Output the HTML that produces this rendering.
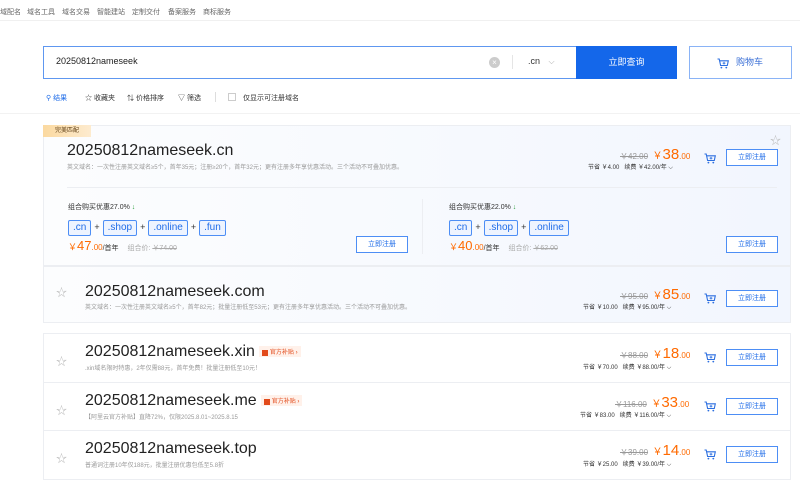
<!DOCTYPE html>
<html><head><meta charset="utf-8"><style>
*{margin:0;padding:0;box-sizing:border-box}
body{width:800px;height:488px;overflow:hidden;background:#fff;font-family:"Liberation Sans","Noto Sans CJK SC",sans-serif;color:#333;position:relative}
.a{position:absolute;white-space:nowrap}
.nav{font-size:7px;color:#666;top:7px}
.card{position:absolute;left:43px;width:748px;border:1px solid #eceef2;background:linear-gradient(90deg,#fcfdfe,#f2f6fe)}
.row{position:absolute;left:43px;width:748px;border:1px solid #eceef2;background:#fff}
.dn{font-size:16px;color:#222}
.desc{font-size:6px;color:#999}
.old{font-size:8px;color:#999;text-decoration:line-through}
.pr{font-size:15px;color:#ff6a00}
.pr small{font-size:8px}
.yen{font-size:10px;color:#ff6a00}
.sub{font-size:6px;color:#333}
.btn{position:absolute;width:52px;height:17px;border:1px solid #4d8ef5;color:#1f6ce8;font-size:7px;text-align:center;line-height:15px;background:#fff}
.tag{display:inline-block;border:1px solid #4d8ef5;border-radius:2px;color:#1f6ce8;font-size:10px;padding:0 4px;height:16px;line-height:14px;background:#eef4ff}
.plus{font-size:9px;color:#333;margin:0 3px}
.star{font-size:11px;color:#bbb}
.badge{display:inline-block;background:#fff1ea;color:#e24a1a;font-size:6px;padding:1px 3px;vertical-align:middle;margin-left:4px}
.badge b{display:inline-block;width:6px;height:6px;background:#e24a1a;vertical-align:middle;margin-right:2px}
.cart{position:absolute;width:12px;height:11px}
</style></head><body>
<svg width="0" height="0" style="position:absolute"><defs><symbol id="c" viewBox="0 0 12 11"><path d="M0.5 1H2.2L3.6 7.5H10.3L11.3 2.8H2.8" fill="none" stroke="#2c6fe0" stroke-width="1.1"/><path d="M5.6 5.2H8.4M7 3.9V6.5" stroke="#2c6fe0" stroke-width="0.9"/><circle cx="4.4" cy="9.6" r="0.9" fill="#2c6fe0"/><circle cx="9.3" cy="9.6" r="0.9" fill="#2c6fe0"/></symbol></defs></svg>
<div class="a nav" style="left:0">域配名</div>
<div class="a nav" style="left:27px">域名工具</div>
<div class="a nav" style="left:62px">域名交易</div>
<div class="a nav" style="left:97px">智能建站</div>
<div class="a nav" style="left:132px">定制交付</div>
<div class="a nav" style="left:168px">备案服务</div>
<div class="a nav" style="left:203px">商标服务</div>
<div class="a" style="left:0;top:20px;width:800px;height:1px;background:#f0f0f0"></div>

<div class="a" style="left:43px;top:46px;width:534px;height:33px;border:1px solid #5e97f0"></div>
<div class="a" style="left:56px;top:56px;font-size:9px;color:#222">20250812nameseek</div>
<div class="a" style="left:489px;top:57px;width:11px;height:11px;border-radius:50%;background:#ccc;color:#fff;font-size:8px;text-align:center;line-height:11px">×</div>
<div class="a" style="left:512px;top:55px;width:1px;height:14px;background:#e5e5e5"></div>
<div class="a" style="left:528px;top:56px;font-size:9px;color:#333">.cn <span style="color:#aaa;font-size:8px;margin-left:6px">⌵</span></div>
<div class="a" style="left:576px;top:46px;width:101px;height:33px;background:#1467ea;color:#fff;font-size:9px;text-align:center;line-height:33px">立即查询</div>
<div class="a" style="left:689px;top:46px;width:103px;height:33px;border:1px solid #8ab3f6;color:#3a6fd6;font-size:9px;line-height:31px"><svg class="cart" style="left:27px;top:11px"><use href="#c"/></svg><span style="position:absolute;left:46px">购物车</span></div>

<div class="a" style="left:46px;top:93px;font-size:7px;color:#1f6ce8">⚲ 结果</div>
<div class="a" style="left:85px;top:93px;font-size:7px;color:#333">☆ 收藏夹</div>
<div class="a" style="left:127px;top:93px;font-size:7px;color:#333">⇅ 价格排序</div>
<div class="a" style="left:178px;top:93px;font-size:7px;color:#333">▽ 筛选</div>
<div class="a" style="left:215px;top:92px;width:1px;height:10px;background:#ddd"></div>
<div class="a" style="left:228px;top:93px;width:8px;height:8px;border:1px solid #ccc"></div>
<div class="a" style="left:243px;top:93px;font-size:7px;color:#333">仅显示可注册域名</div>
<div class="a" style="left:0;top:113px;width:800px;height:1px;background:#f2f2f2"></div>

<div class="card" style="top:125px;height:141px"></div>
<div class="a" style="left:43px;top:125px;width:48px;height:12px;background:linear-gradient(90deg,#fbd9a0,#fdebcf);font-size:6px;color:#5a3a10;text-align:center;line-height:12px">完美匹配</div>
<div class="a" style="left:770px;top:131px" ><span class="star">☆</span></div>
<div class="a dn" style="left:67px;top:142px">20250812nameseek.cn</div>
<div class="a desc" style="left:67px;top:162px">英文域名：一次性注册英文域名≥5个，首年35元；注册≥20个，首年32元；更有注册多年享优惠活动。三个活动不可叠加优惠。</div>
<div class="a" style="left:620px;top:146px"><span class="old">￥42.00</span> <span class="yen">￥</span><span class="pr">38<small>.00</small></span></div>
<div class="a sub" style="left:588px;top:162px">节省 ￥4.00 &nbsp;&nbsp;续费 ￥42.00/年 ⌵</div>
<svg class="cart" style="left:704px;top:153px"><use href="#c"/></svg>
<div class="btn" style="left:726px;top:149px">立即注册</div>
<div class="a" style="left:67px;top:187px;width:710px;height:1px;background:#eceef2"></div>
<div class="a" style="left:422px;top:199px;width:1px;height:55px;background:#eceef2"></div>

<div class="a" style="left:68px;top:202px;font-size:7px;color:#333">组合购买优惠27.0% <span style="color:#2a9d3c">↓</span></div>
<div class="a" style="left:68px;top:217px"><span class="tag">.cn</span><span class="plus">+</span><span class="tag">.shop</span><span class="plus">+</span><span class="tag">.online</span><span class="plus">+</span><span class="tag">.fun</span></div>
<div class="a" style="left:68px;top:237px"><span class="yen" style="font-size:9px">￥</span><span class="pr" style="font-size:13px">47<small>.00</small></span><span style="font-size:7px">/首年</span> &nbsp;<span style="font-size:7px;color:#aaa">组合价: <s>￥74.00</s></span></div>
<div class="btn" style="left:356px;top:236px">立即注册</div>

<div class="a" style="left:449px;top:202px;font-size:7px;color:#333">组合购买优惠22.0% <span style="color:#2a9d3c">↓</span></div>
<div class="a" style="left:449px;top:217px"><span class="tag">.cn</span><span class="plus">+</span><span class="tag">.shop</span><span class="plus">+</span><span class="tag">.online</span></div>
<div class="a" style="left:449px;top:237px"><span class="yen" style="font-size:9px">￥</span><span class="pr" style="font-size:13px">40<small>.00</small></span><span style="font-size:7px">/首年</span> &nbsp;<span style="font-size:7px;color:#aaa">组合价: <s>￥62.00</s></span></div>
<div class="btn" style="left:726px;top:236px">立即注册</div>

<div class="card" style="top:266px;height:57px"></div>
<div class="a star" style="left:56px;top:284px">☆</div>
<div class="a dn" style="left:85px;top:283px">20250812nameseek.com</div>
<div class="a desc" style="left:85px;top:302px">英文域名：一次性注册英文域名≥5个，首年82元；批量注册低至53元；更有注册多年享优惠活动。三个活动不可叠加优惠。</div>
<div class="a" style="left:620px;top:286px"><span class="old">￥95.00</span> <span class="yen">￥</span><span class="pr">85<small>.00</small></span></div>
<div class="a sub" style="left:583px;top:302px">节省 ￥10.00 &nbsp;&nbsp;续费 ￥95.00/年 ⌵</div>
<svg class="cart" style="left:704px;top:293px"><use href="#c"/></svg>
<div class="btn" style="left:726px;top:290px">立即注册</div>

<div class="row" style="top:333px;height:50px"></div>
<div class="a star" style="left:56px;top:353px">☆</div>
<div class="a dn" style="left:85px;top:343px">20250812nameseek.xin<span class="badge"><b></b>官方补贴 ›</span></div>
<div class="a desc" style="left:85px;top:363px">.xin域名限时特惠，2年仅需88元，首年免费！批量注册低至10元！</div>
<div class="a" style="left:620px;top:345px"><span class="old">￥88.00</span> <span class="yen">￥</span><span class="pr">18<small>.00</small></span></div>
<div class="a sub" style="left:583px;top:362px">节省 ￥70.00 &nbsp;&nbsp;续费 ￥88.00/年 ⌵</div>
<svg class="cart" style="left:704px;top:352px"><use href="#c"/></svg>
<div class="btn" style="left:726px;top:349px">立即注册</div>

<div class="row" style="top:382px;height:49px"></div>
<div class="a star" style="left:56px;top:402px">☆</div>
<div class="a dn" style="left:85px;top:392px">20250812nameseek.me<span class="badge"><b></b>官方补贴 ›</span></div>
<div class="a desc" style="left:85px;top:412px">【阿里云官方补贴】直降72%，仅限2025.8.01~2025.8.15</div>
<div class="a" style="left:615px;top:394px"><span class="old">￥116.00</span> <span class="yen">￥</span><span class="pr">33<small>.00</small></span></div>
<div class="a sub" style="left:580px;top:410px">节省 ￥83.00 &nbsp;&nbsp;续费 ￥116.00/年 ⌵</div>
<svg class="cart" style="left:704px;top:401px"><use href="#c"/></svg>
<div class="btn" style="left:726px;top:398px">立即注册</div>

<div class="row" style="top:430px;height:50px"></div>
<div class="a star" style="left:56px;top:450px">☆</div>
<div class="a dn" style="left:85px;top:440px">20250812nameseek.top</div>
<div class="a desc" style="left:85px;top:460px">普通词注册10年仅188元，批量注册优惠包低至5.8折</div>
<div class="a" style="left:620px;top:442px"><span class="old">￥39.00</span> <span class="yen">￥</span><span class="pr">14<small>.00</small></span></div>
<div class="a sub" style="left:583px;top:459px">节省 ￥25.00 &nbsp;&nbsp;续费 ￥39.00/年 ⌵</div>
<svg class="cart" style="left:704px;top:449px"><use href="#c"/></svg>
<div class="btn" style="left:726px;top:446px">立即注册</div>
</body></html>
